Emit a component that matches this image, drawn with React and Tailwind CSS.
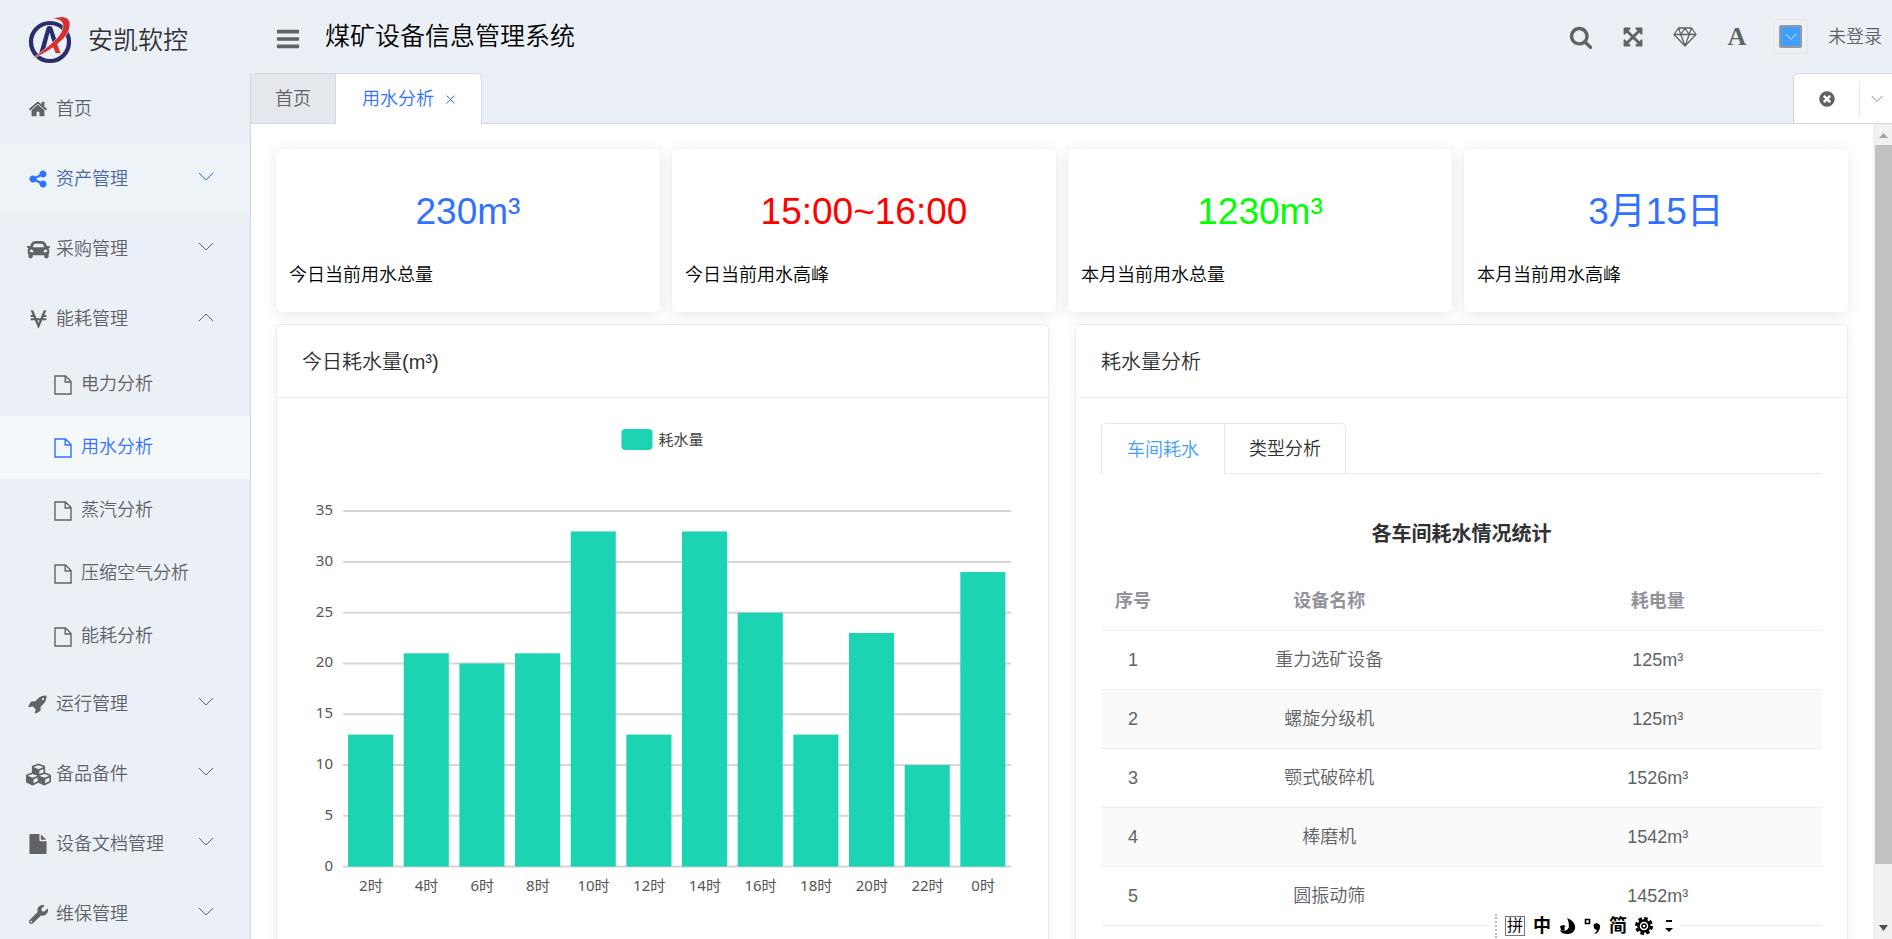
// src/App.jsx
import React, { useState } from "react";
import { FaCar, FaViacoin, FaCubes, FaWrench } from "react-icons/fa";

// Solid glyphs on a 1792 grid
const HOME =
  "M1472 992v480q0 26-19 45t-45 19h-384v-384h-256v384h-384q-26 0-45-19t-19-45v-480q0-1 .5-3t.5-3l575-474 575 474q1 2 1 6zm223-69l-62 74q-8 9-21 11h-3q-13 0-21-7l-692-577-692 577q-12 8-24 7-13-2-21-11l-62-74q-8-10-7-23.5t11-21.5l719-599q32-26 76-26t76 26l244 204v-195q0-14 9-23t23-9h192q14 0 23 9t9 23v408l219 182q10 8 11 21.5t-7 23.5z";
const SHARE =
  "M1344 1024q133 0 226.5 93.5t93.5 226.5-93.5 226.5-226.5 93.5-226.5-93.5-93.5-226.5q0-12 2-34l-360-180q-92 86-218 86-133 0-226.5-93.5t-93.5-226.5 93.5-226.5 226.5-93.5q126 0 218 86l360-180q-2-22-2-34 0-133 93.5-226.5t226.5-93.5 226.5 93.5 93.5 226.5-93.5 226.5-226.5 93.5q-126 0-218-86l-360 180q2 22 2 34t-2 34l360 180q92-86 218-86z";
const SEARCH =
  "M1216 832q0-185-131.5-316.5t-316.5-131.5-316.5 131.5-131.5 316.5 131.5 316.5 316.5 131.5 316.5-131.5 131.5-316.5zm512 832q0 52-38 90t-90 38q-54 0-90-38l-343-342q-179 124-399 124-143 0-273.5-55.5t-225-150-150-225-55.5-273.5 55.5-273.5 150-225 225-150 273.5-55.5 273.5 55.5 225 150 150 225 55.5 273.5q0 220-124 399l343 343q37 37 37 90z";
const ARROWS =
  "M1411 541l-355 355 355 355 144-144q29-31 70-14 39 17 39 59v448q0 26-19 45t-45 19h-448q-42 0-59-40-17-39 14-69l144-144-355-355-355 355 144 144q31 30 14 69-17 40-59 40h-448q-26 0-45-19t-19-45v-448q0-42 40-59 39-17 69 14l144 144 355-355-355-355-144 144q-19 19-45 19-12 0-24-5-40-17-40-59v-448q0-26 19-45t45-19h448q42 0 59 40 17 39-14 69l-144 144 355 355 355-355-144-144q-31-30-14-69 17-40 59-40h448q26 0 45 19t19 45v448q0 42-39 59-13 5-25 5-26 0-45-19z";
const BARS =
  "M1664 1344v128q0 26-19 45t-45 19h-1408q-26 0-45-19t-19-45v-128q0-26 19-45t45-19h1408q26 0 45 19t19 45zm0-512v128q0 26-19 45t-45 19h-1408q-26 0-45-19t-19-45v-128q0-26 19-45t45-19h1408q26 0 45 19t19 45zm0-512v128q0 26-19 45t-45 19h-1408q-26 0-45-19t-19-45v-128q0-26 19-45t45-19h1408q26 0 45 19t19 45z";
const FILE =
  "M1152 512v-472q22 14 36 28l408 408q14 14 28 36h-472zm-128 32q0 40 28 68t68 28h544v1056q0 40-28 68t-68 28h-1344q-40 0-68-28t-28-68v-1600q0-40 28-68t68-28h800v544z";
const ROCKET =
  "M1440 448q0-40-28-68t-68-28-68 28-28 68 28 68 68 28 68-28 28-68zm224-288q0 249-75.5 430.5t-253.5 360.5q-81 80-195 176l-20 379q-2 16-16 26l-384 224q-7 4-16 4-12 0-23-9l-64-64q-13-14-8-32l85-276-281-281-276 85q-3 1-9 1-14 0-23-9l-64-64q-17-19-5-39l224-384q10-14 26-16l379-20q96-114 176-195 188-187 358-258t431-71q14 0 24 9.5t10 22.5z";
const CLOSE_CIRCLE =
  "M1277 1122q0-26-19-45l-181-181 181-181q19-19 19-45 0-27-19-46l-90-90q-19-19-46-19-26 0-45 19l-181 181-181-181q-19-19-45-19-27 0-46 19l-90 90q-19 19-19 46 0 26 19 45l181 181-181 181q-19 19-19 45 0 27 19 46l90 90q19 19 46 19 26 0 45-19l181-181 181 181q19 19 45 19 27 0 46-19l90-90q19-19 19-46zm387-226q0 209-103 385.5t-279.5 279.5-385.5 103-385.5-103-279.5-279.5-103-385.5 103-385.5 279.5-279.5 385.5-103 385.5 103 279.5 279.5 103 385.5z";

const Glyph = ({ d, size = 20 }) => (
  <svg width={size} height={size} viewBox="0 0 1792 1792" fill="currentColor">
    <path d={d} />
  </svg>
);

const Chevron = ({ up, size = 16 }) => (
  <svg width={size} height={size} viewBox="0 0 16 16" fill="none" stroke="currentColor">
    <path d={up ? "M1 12l7-7 7 7" : "M1 4l7 7 7-7"} />
  </svg>
);

const FileOutline = () => (
  <svg width="18" height="20" viewBox="0 0 18 20" fill="none" stroke="currentColor" strokeWidth="1.4">
    <path d="M1 1h10.5L17 6.5V19H1zM11.2 1v6H17" />
  </svg>
);

const Diamond = () => (
  <svg width="24" height="20" viewBox="0 0 24 20" fill="none" stroke="currentColor" strokeWidth="1.3" strokeLinejoin="round">
    <path d="M5.5 1h13L23 7.5 12 19 1 7.5zM1 7.5h22M5.5 1l2.3 6.5L12 19l4.2-11.5L18.5 1M7.8 7.5L12 1l4.2 6.5" />
  </svg>
);

const Logo = () => (
  <svg width="60" height="62" viewBox="0 0 60 62" fill="none">
    <ellipse cx="30" cy="34" rx="19" ry="19" stroke="#2a2d6b" strokeWidth="4.2" />
    <path d="M19 46l7.500-26q.5-2 2.500-2h1q2 0 2.500 2l4 12-3.500 3.500-3.500-11L25 42z" fill="#2a2d6b" />
    <path
      d="M33 11c7-4 17-3 17 5 0 9-6 15-12.500 20l3.500 9.500h-5.500L33 39.500C27 44 19 48 12 51c7-6 15-11 21-17 6-5.500 10-11 10-16 0-5-4-7-10-7z"
      fill="#d3302f"
      stroke="#ebf0f7"
      strokeWidth="0.6"
    />
  </svg>
);

const menu = [
  { name: "首页", icon: <Glyph d={HOME} /> },
  { name: "资产管理", icon: <Glyph d={SHARE} />, group: true, hover: true },
  { name: "采购管理", icon: <FaCar size={23} />, group: true },
  {
    name: "能耗管理",
    icon: <FaViacoin size={21} />,
    group: true,
    children: ["电力分析", "用水分析", "蒸汽分析", "压缩空气分析", "能耗分析"],
  },
  { name: "运行管理", icon: <Glyph d={ROCKET} />, group: true },
  { name: "备品备件", icon: <FaCubes size={25} />, group: true },
  { name: "设备文档管理", icon: <Glyph d={FILE} />, group: true },
  { name: "维保管理", icon: <FaWrench size={19} />, group: true },
];

const stats = [
  { value: "230m³", label: "今日当前用水总量", color: "text-[#3072ff]" },
  { value: "15:00~16:00", label: "今日当前用水高峰", color: "text-[#ff0000]" },
  { value: "1230m³", label: "本月当前用水总量", color: "text-[#00ff00]" },
  { value: "3月15日", label: "本月当前用水高峰", color: "text-[#3072ff]" },
];

const hours = [
  ["2时", 13],
  ["4时", 21],
  ["6时", 20],
  ["8时", 21],
  ["10时", 33],
  ["12时", 13],
  ["14时", 33],
  ["16时", 25],
  ["18时", 13],
  ["20时", 23],
  ["22时", 10],
  ["0时", 29],
];

const rows = [
  ["重力选矿设备", "125m³"],
  ["螺旋分级机", "125m³"],
  ["颚式破碎机", "1526m³"],
  ["棒磨机", "1542m³"],
  ["圆振动筛", "1452m³"],
];

function Sidebar() {
  const [active, setActive] = useState("用水分析");

  return (
    <aside className="w-[250px] shrink-0 overflow-hidden bg-[#ebf0f7]">
      <div className="flex h-[73px] items-center gap-2 pl-5 pt-1">
        <Logo />
        <span className="pt-1 text-[25px] text-[#303133]">安凯软控</span>
      </div>
      <nav>
        {menu.map((item) => {
          const content = (
            <>
              <span className="flex w-7 justify-center">{item.icon}</span>
              <span className={item.hover ? "text-[#4a66a8]" : ""}>{item.name}</span>
              {item.group && (
                <span className="ml-auto pb-1">
                  <Chevron up={!!item.children} />
                </span>
              )}
            </>
          );
          return (
            <div key={item.name}>
              {item.group ? (
                <button
                  type="button"
                  className={`flex h-[70px] w-full items-center gap-1 pl-6 pr-9 pt-0.5 ${
                    item.hover ? "bg-[#edf3f7] text-[#3072ff]" : ""
                  }`}
                >
                  {content}
                </button>
              ) : (
                <a href="#home" className="flex h-[70px] items-center gap-1 pl-6 pr-9 pt-0.5">
                  {content}
                </a>
              )}
              {item.children?.map((child) => (
                <a
                  key={child}
                  href="#page"
                  onClick={() => setActive(child)}
                  className={`flex h-[63px] items-center gap-[9px] pl-[54px] ${
                    child === active ? "bg-[#f4f8fb] text-[#3072ff]" : ""
                  }`}
                >
                  <FileOutline />
                  {child}
                </a>
              ))}
            </div>
          );
        })}
      </nav>
    </aside>
  );
}

function Header() {
  return (
    <header className="flex h-[73px] items-center bg-[#ebf0f7] pl-[25px] pr-[10px]">
      <button type="button" aria-label="折叠菜单" className="pt-1">
        <Glyph d={BARS} size={26} />
      </button>
      <h1 className="ml-6 text-[25px] text-black">煤矿设备信息管理系统</h1>
      <div className="ml-auto flex items-center gap-7">
        <button type="button" aria-label="搜索">
          <Glyph d={SEARCH} size={24} />
        </button>
        <button type="button" aria-label="全屏" className="flex w-6 justify-center">
          <Glyph d={ARROWS} size={22} />
        </button>
        <button type="button" aria-label="主题">
          <Diamond />
        </button>
        <button
          type="button"
          aria-label="字体"
          className="flex w-6 justify-center font-['Liberation_Serif',serif] text-[26px] font-bold leading-none"
        >
          A
        </button>
        <button
          type="button"
          aria-label="颜色"
          className="-mx-1 flex size-[35px] items-center justify-center rounded-[5px] border border-[#e6e6e6]"
        >
          <span className="flex size-[23px] items-center justify-center rounded-[2px] border-2 border-[#999] bg-[#409eff] text-white">
            <Chevron size={12} />
          </span>
        </button>
        <a href="#login" className="-ml-1 pt-0.5">
          未登录
        </a>
      </div>
    </header>
  );
}

function TabBar() {
  return (
    <div className="flex h-[51px] justify-between border-b border-[#cfd7e5] bg-[#ebf0f7]">
      <div className="flex h-[51px] rounded-t-[5px] border-r border-t border-[#cfd7e5]">
        <button type="button" className="mb-px rounded-tl-[5px] border-r border-[#cfd7e5] bg-[#e4e8ec] px-6 pt-0.5">
          首页
        </button>
        <button type="button" className="flex items-center gap-3 rounded-tr-[5px] bg-white px-[26px] text-[#3072ff]">
          用水分析
          <svg width="9" height="9" viewBox="0 0 9 9" stroke="currentColor">
            <path d="M.5.5l8 8M8.5.5l-8 8" />
          </svg>
        </button>
      </div>
      <div className="flex items-center rounded-tl-[5px] border-l border-t border-[#cfd7e5] bg-white">
        <button type="button" aria-label="关闭全部" className="flex w-[65px] justify-center">
          <Glyph d={CLOSE_CIRCLE} size={18} />
        </button>
        <button type="button" aria-label="更多" className="flex h-[34px] w-[33px] items-center border-l border-[#e4e7ed] pl-[11px]">
          <Chevron size={12} />
        </button>
      </div>
    </div>
  );
}

function BarChart() {
  const base = 443;
  const unit = 355 / 35;
  const step = 667 / 12;
  return (
    <svg
      viewBox="0 0 720 530"
      className="w-full font-['Noto_Sans','Noto_Sans_CJK_SC',sans-serif] font-normal"
    >
      <rect x="319" y="6" width="31" height="21" rx="4" fill="#1cd4b2" />
      <text x="356" y="22" fontSize="15" fill="#444">
        耗水量
      </text>
      {[0, 5, 10, 15, 20, 25, 30, 35].map((n) => (
        <g key={n}>
          <line x1="41" x2="708" y1={base - n * unit} y2={base - n * unit} stroke="#d6d6d6" strokeWidth="2" />
          <text x="31" y={base - n * unit + 4} fontSize="15" fill="#555" textAnchor="end">
            {n}
          </text>
        </g>
      ))}
      {hours.map(([label, n], i) => (
        <g key={label}>
          <rect x={46 + i * step} y={base - n * unit} width="45" height={n * unit} fill="#1cd4b2" />
          <text x={41 + (i + 0.5) * step} y="467" fontSize="15" fill="#555" textAnchor="middle">
            {label}
          </text>
        </g>
      ))}
    </svg>
  );
}

function Panel({ title, children }) {
  return (
    <section className="rounded-[5px] border border-[#e8ecf8] bg-white shadow-[0_2px_12px_rgba(120,140,220,0.12)]">
      <h2 className="flex h-[73px] items-center border-b border-[#ebeef5] px-[25px] pt-0.5 text-[20px] text-[#303133]">
        {title}
      </h2>
      <div className="p-[25px]">{children}</div>
    </section>
  );
}

function Analysis() {
  return (
    <>
      <div className="flex h-[51px] border-b border-[#e4e7ed]">
        <div className="flex h-[51px] rounded-t-[5px] border-x border-t border-[#e4e7ed] text-[#303133]">
          <button type="button" className="rounded-tl-[5px] bg-white px-[25px] pt-0.5 text-[#409eff]">
            车间耗水
          </button>
          <button type="button" className="border-b border-l border-[#e4e7ed] px-6 pt-0.5">
            类型分析
          </button>
        </div>
      </div>
      <h3 className="mb-6 mt-[47px] text-center text-[20px] font-bold leading-[26px] text-[#303133]">
        各车间耗水情况统计
      </h3>
      <table className="w-full table-fixed text-center">
        <thead>
          <tr className="h-[59px] border-b border-[#ebeef5] text-[#909399]">
            <th className="w-[64px] pt-0.5">序号</th>
            <th className="pt-0.5">设备名称</th>
            <th className="pt-0.5">耗电量</th>
          </tr>
        </thead>
        <tbody>
          {rows.map(([name, amount], i) => (
            <tr key={name} className="h-[59px] border-b border-[#ebeef5] even:bg-[#fafafa]">
              <td className="pt-0.5">{i + 1}</td>
              <td className="pt-0.5">{name}</td>
              <td className="pt-0.5">{amount}</td>
            </tr>
          ))}
        </tbody>
      </table>
    </>
  );
}

// Floating input method toolbar
function ImeBar() {
  return (
    <div className="fixed bottom-0 right-[212px] flex h-[27px] w-[190px] items-center gap-2 bg-white pl-[5px] text-[18px] font-bold leading-none text-black">
      <span className="h-6 border-l-2 border-dotted border-[#bbb]" />
      <span className="flex size-5 items-center justify-center border border-[#777] text-[16px] font-normal">拼</span>
      <span>中</span>
      <svg width="17" height="18" viewBox="0 0 17 18">
        <path d="M8 1c6 2 9 7 8 11-1 3-4 5-8 5-3 0-6-1-7-4l4 1 3-1c3-3 2-8 0-12z" />
        <path d="M1 9l4-1 2 2-2 4-3-1z" />
        <path d="M8 8l2 2-3 3-2-2z" fill="#fff" />
      </svg>
      <svg width="17" height="18" viewBox="0 0 17 18">
        <path d="M1.500 2.500h4v4h-4z" fill="none" stroke="#000" strokeWidth="1.600" />
        <path d="M10 7c4-2 7 1 6 4-1 3-3 6-6 6 2-2 3-3 3-4-3 0-4-4-3-6z" />
      </svg>
      <span>简</span>
      <svg width="18" height="18" viewBox="0 0 18 18" fill="none" stroke="#000">
        <circle cx="9" cy="9" r="7.5" strokeWidth="3" strokeDasharray="3.500 2.390" />
        <circle cx="9" cy="9" r="5.5" strokeWidth="2.500" />
        <circle cx="9" cy="9" r="2" strokeWidth="1.500" />
      </svg>
      <svg width="8" height="16" viewBox="0 0 8 16" className="ml-1">
        <path d="M1 2h6v2H1zM0 10h8l-4 4z" />
      </svg>
    </div>
  );
}

export default function App() {
  return (
    <div className="flex h-screen overflow-hidden bg-white font-['Liberation_Sans','Noto_Sans_CJK_SC',sans-serif] text-[18px] font-[350] text-[#606266]">
      <Sidebar />
      <div className="flex min-w-0 flex-1 flex-col">
        <Header />
        <div className="flex min-h-0 flex-1 flex-col border-l border-[#cfd7e5]">
          <TabBar />
          <div className="flex min-h-0 flex-1">
            <main className="min-w-0 flex-1 overflow-hidden p-[25px]">
              <div className="grid grid-cols-4 gap-3">
                {stats.map((s) => (
                  <div
                    key={s.label}
                    className="flex h-[163px] flex-col justify-between rounded-[5px] bg-white px-[13px] pb-6 pt-[42px] shadow-[0_2px_14px_rgba(0,0,0,0.1)]"
                  >
                    <p className={`text-center text-[37px] font-normal leading-[42px] ${s.color}`}>{s.value}</p>
                    <p className="leading-[26px] text-black">{s.label}</p>
                  </div>
                ))}
              </div>
              <div className="mt-3 grid grid-cols-2 gap-[26px]">
                <Panel title="今日耗水量(m³)">
                  <BarChart />
                </Panel>
                <Panel title="耗水量分析">
                  <Analysis />
                </Panel>
              </div>
            </main>
            {/* Scrollbar */}
            <div className="flex w-[19px] flex-col items-center bg-[#f1f1f1] pl-0.5">
              <svg width="9" height="21" viewBox="0 0 9 21" fill="#a3a3a3">
                <path d="M0 14h9l-4.500-5z" />
              </svg>
              <div className="h-[719px] w-full bg-[#c1c1c1]" />
              <svg width="9" height="21" viewBox="0 0 9 21" fill="#505050" className="mt-auto">
                <path d="M0 7h9l-4.500 6z" />
              </svg>
            </div>
          </div>
        </div>
      </div>
      <ImeBar />
    </div>
  );
}
